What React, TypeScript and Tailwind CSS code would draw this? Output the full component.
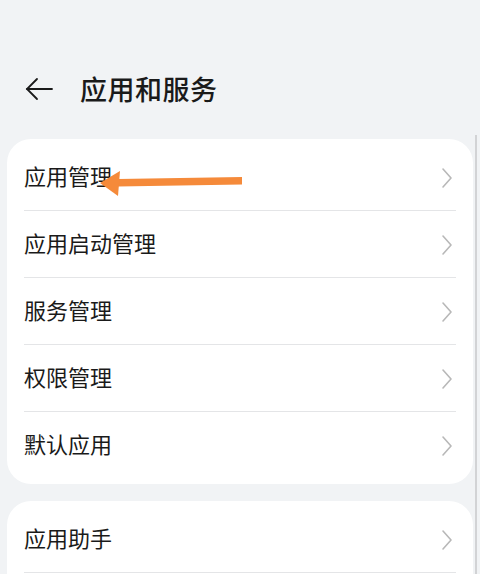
const groups = [
  ['应用管理', '应用启动管理', '服务管理', '权限管理', '默认应用'],
  ['应用助手', ''],
];

const Chevron = () => (
  <svg width="12" height="22" viewBox="0 0 12 22" fill="none" stroke="#b8b8b8" strokeWidth="1.6" strokeLinecap="round" strokeLinejoin="round">
    <path d="M2 2l8 9-8 9" />
  </svg>
);

const Row = ({ label, last }: { label: string; last: boolean }) => (
  <div className="relative flex h-[67px] items-center justify-between pl-[17px] pr-[20px]">
    <span className="mt-[-6px] text-[22px] leading-none text-[#1a1a1a]">{label}</span>
    {label && <Chevron />}
    {!last && <div className="absolute bottom-0 left-[17px] right-[17px] h-px bg-[#e4e5e7]" />}
  </div>
);

export default function App() {
  return (
    <div
      className="relative h-[574px] w-[480px] overflow-hidden bg-[#f1f3f5]"
      style={{ fontFamily: '"Noto Sans CJK SC", "Noto Sans", sans-serif' }}
    >
      <div className="flex h-[139px] items-start gap-[26px] pl-[24px] pt-[74px]">
        <svg width="30" height="30" viewBox="0 0 30 30" fill="none" stroke="#1a1a1a" strokeWidth="1.8" strokeLinecap="round">
          <path d="M28 15H3" />
          <path d="M13 5L3 15l10 10" />
        </svg>
        <h1 className="mt-[1px] text-[27px] font-medium leading-none tracking-[0.5px] text-[#1a1a1a]">应用和服务</h1>
      </div>

      <div className="flex flex-col gap-[17px] px-[7px]">
        {groups.map((items, gi) => (
          <div key={gi} className="rounded-[24px] bg-white py-[5px]">
            {items.map((label, i) => (
              <Row key={i} label={label} last={i === items.length - 1} />
            ))}
          </div>
        ))}
      </div>

      {/* annotation arrow */}
      <svg className="absolute left-[98px] top-[168px]" width="148" height="30" viewBox="0 0 148 30">
        <path d="M20 11L144 9L144 16.5L20 18.5Z" fill="#f58a3a" />
        <path d="M2 15L22 3L20 28Z" fill="#f58a3a" />
      </svg>

      {/* scroll edge */}
      <div className="absolute bottom-0 right-[3px] top-[135px] w-[2px] bg-[#d2d3d5]" />
    </div>
  );
}
